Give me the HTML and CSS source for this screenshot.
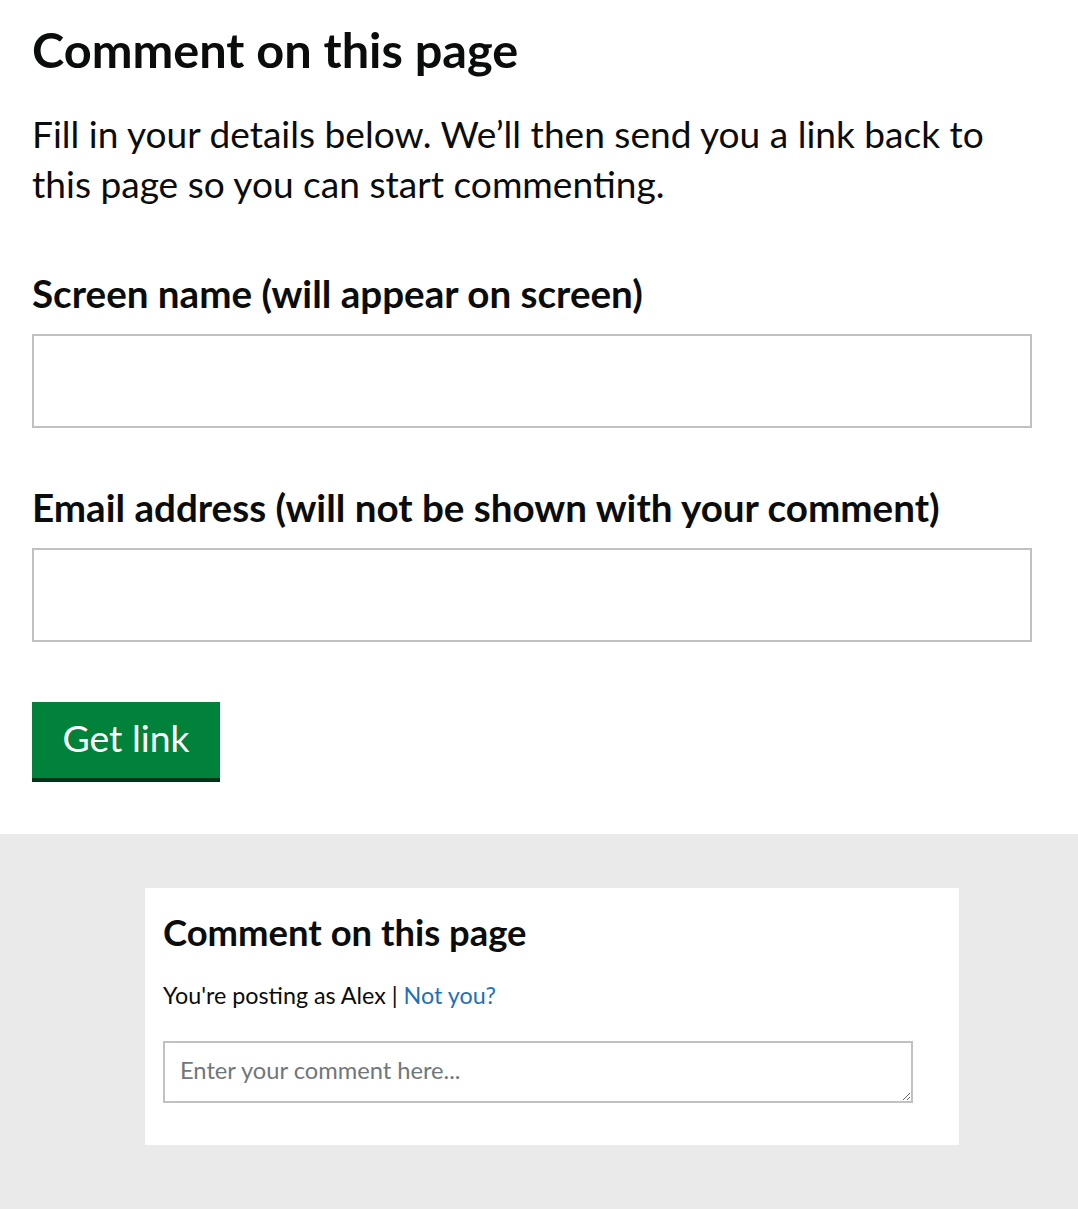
FILE: index.html
```html
<!DOCTYPE html>
<html lang="en">
<head>
<meta charset="utf-8">
<title>Comment on this page</title>
<link rel="stylesheet" href="styles.css">
</head>
<body>
<main class="signup">
  <h1 class="title">Comment on this page</h1>
  <p class="intro">Fill in your details below. We’ll then send you a link back to this page so you can start commenting.</p>
  <form class="form">
    <div class="field">
      <label class="label" for="name">Screen name (will appear on screen)</label>
      <input class="input" id="name" type="text">
    </div>
    <div class="field">
      <label class="label" for="email">Email address (will not be shown with your comment)</label>
      <input class="input" id="email" type="email">
    </div>
    <button class="button" type="button">Get link</button>
  </form>
</main>
<section class="comments">
  <div class="card">
    <h2 class="card-title">Comment on this page</h2>
    <p class="posting">You're posting as Alex | <a class="link" href="#">Not you?</a></p>
    <textarea class="textarea" placeholder="Enter your comment here..."></textarea>
  </div>
</section>
</body>
</html>
```

FILE: styles.css
```css
html, body {
  margin: 0;
  padding: 0;
  background: #ffffff;
  color: #0b0c0c;
  font-family: Lato, "Liberation Sans", Arial, sans-serif;
}

.signup {
  width: 1000px;
  padding: 0 46px 0 32px;
}

.title {
  margin: 19px 0 0;
  font-size: 48.7px;
  line-height: 60px;
  font-weight: 700;
}

.intro {
  margin: 30px 0 0;
  font-size: 37.1px;
  line-height: 50px;
}

.form {
  margin: 0;
}

.field {
  margin-top: 61px;
}

.field + .field {
  margin-top: 56px;
}

.label {
  display: block;
  font-size: 38.6px;
  line-height: 46px;
  font-weight: 700;
  margin-bottom: 18px;
}

.input {
  display: block;
  box-sizing: border-box;
  width: 1000px;
  height: 94px;
  margin: 0;
  border: 2px solid #bfc1c3;
  border-radius: 0;
  background: #fff;
  font: inherit;
  font-size: 35px;
  padding: 0 16px;
}

.button {
  display: block;
  margin: 60px 0 0;
  box-sizing: border-box;
  width: 188px;
  height: 80px;
  padding: 0 0 5px;
  border: 0;
  border-bottom: 4px solid #003418;
  border-radius: 0;
  background: #00823b;
  color: #ffffff;
  font-family: Lato, "Liberation Sans", Arial, sans-serif;
  font-size: 37.3px;
  line-height: 1;
  cursor: pointer;
}

.comments {
  margin-top: 52px;
  background: #eaeaea;
  padding: 54px 0 80px 145px;
}

.card {
  width: 814px;
  box-sizing: border-box;
  background: #ffffff;
  padding: 22px 46px 42px 18px;
}

.card-title {
  margin: 0;
  font-size: 36.4px;
  line-height: 45px;
  font-weight: 700;
}

.posting {
  margin: 25px 0 0;
  font-size: 23.3px;
  line-height: 30px;
}

.link {
  color: #1d70b8;
  text-decoration: none;
}

.textarea {
  display: block;
  box-sizing: border-box;
  width: 750px;
  height: 62px;
  margin: 31px 0 0;
  border: 2px solid #bfc1c3;
  border-radius: 0;
  padding: 12px 15px;
  font-family: Lato, "Liberation Sans", Arial, sans-serif;
  font-size: 23.7px;
  line-height: 30px;
  color: #0b0c0c;
  resize: both;
}

.textarea::placeholder {
  color: #6f777b;
  opacity: 1;
}
```
